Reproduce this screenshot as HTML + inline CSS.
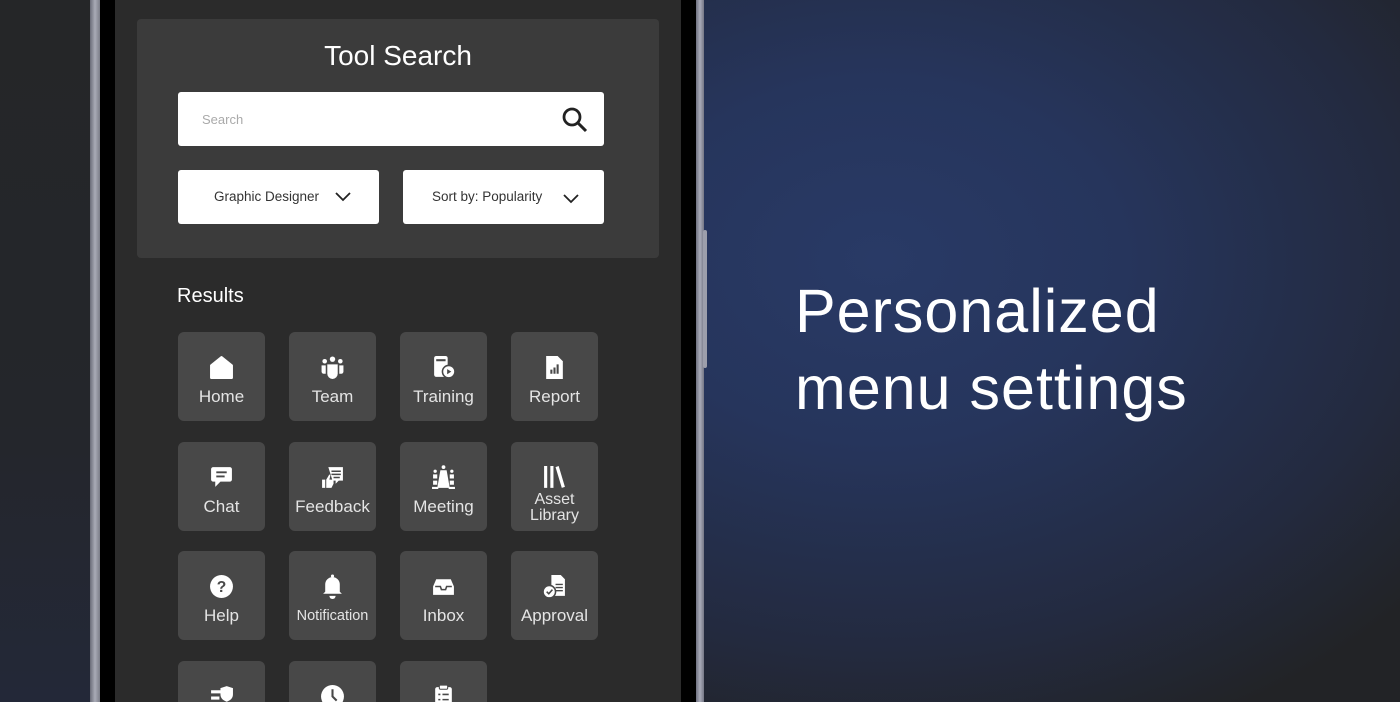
<!DOCTYPE html>
<html><head><meta charset="utf-8"><style>
*{margin:0;padding:0;box-sizing:border-box}
html{width:1400px;height:702px;overflow:hidden}
body{width:1400px;height:702px;overflow:hidden;position:relative;font-family:"Liberation Sans",sans-serif;
background:radial-gradient(ellipse 700px 520px at 880px 260px,#293a66 0%,#26355c 35%,#232a3f 75%,#222326 100%);}
.clip{position:absolute;left:0;top:0;width:1400px;height:702px;overflow:hidden}
.leftbg{position:absolute;left:0;top:0;width:700px;height:702px;background:linear-gradient(180deg,#252628 0%,#24262b 60%,#232838 100%)}
.frameL{position:absolute;left:90px;top:0;width:10px;height:702px;background:linear-gradient(90deg,#6a6c78,#a9abb6 50%,#7b7d88)}
.frameR{position:absolute;left:696px;top:0;width:8px;height:702px;background:linear-gradient(90deg,#6f7180,#a9abb8 50%,#757786)}
.btnR{position:absolute;left:703px;top:230px;width:4px;height:138px;border-radius:2px;background:#9c9eab}
.black{position:absolute;left:99px;top:0;width:598px;height:702px;background:#000}
.screen{position:absolute;left:115px;top:0;width:566px;height:702px;background:#2b2b2b}
.panel{position:absolute;left:137px;top:19px;width:522px;height:239px;background:#3b3b3b;border-radius:4px}
.title{position:absolute;left:137px;width:522px;top:40px;text-align:center;color:#fff;font-size:28px}
.box{position:absolute;background:#fff;border-radius:3px}
.res{position:absolute;left:177px;top:285px;color:#fff;font-size:20px}
.tile{position:absolute;width:87px;height:89px;background:#484848;border-radius:6px;color:#e4e4e4;text-align:center}
.tile svg{position:absolute;left:31px;top:23px}
.tile span{position:absolute;left:0;right:0;top:55px;font-size:17px}
.last{height:41px;border-radius:6px 6px 0 0}
.big{position:absolute;left:795px;color:#fff;font-size:61px;letter-spacing:1px}
</style></head><body><div class="clip">
<div class="leftbg"></div>
<div class="black"></div>
<div class="frameL"></div>
<div class="frameR"></div>
<div class="btnR"></div>
<div class="screen"></div>
<div class="panel"></div>
<div class="title">Tool Search</div>
<div class="box" style="left:178px;top:92px;width:426px;height:54px"><span style="position:absolute;left:24px;top:20px;font-size:13px;color:#aaa">Search</span>
<svg style="position:absolute;left:383px;top:14px" width="28" height="28" viewBox="0 0 28 28"><circle cx="11" cy="11" r="8" fill="none" stroke="#222" stroke-width="2.8"/><path d="M17 17l8 8" stroke="#222" stroke-width="3"/></svg></div>
<div class="box" style="left:178px;top:170px;width:201px;height:54px"><span style="position:absolute;left:36px;top:19px;font-size:13.5px;color:#333">Graphic Designer</span>
<svg style="position:absolute;left:157px;top:22px" width="16" height="10" viewBox="0 0 16 10"><path d="M1 1l7 7 7-7" fill="none" stroke="#222" stroke-width="1.8"/></svg></div>
<div class="box" style="left:403px;top:170px;width:201px;height:54px"><span style="position:absolute;left:29px;top:19px;font-size:13.5px;color:#333">Sort by: Popularity</span>
<svg style="position:absolute;left:160px;top:24px" width="16" height="10" viewBox="0 0 16 10"><path d="M1 1l7 7 7-7" fill="none" stroke="#222" stroke-width="1.8"/></svg></div>
<div class="res">Results</div>

<div class="tile" style="left:178px;top:332px"><svg width="25" height="25" viewBox="0 0 24 24"><path d="M2 10L12 2l10 8v12H2z" fill="#fff" stroke="#fff" stroke-linejoin="round" stroke-width="2"/></svg><span>Home</span></div>
<div class="tile" style="left:289px;top:332px"><svg width="25" height="25" viewBox="0 0 24 24"><circle cx="12" cy="4" r="2.6" fill="#fff"/><circle cx="4.5" cy="6" r="2.2" fill="#fff"/><circle cx="19.5" cy="6" r="2.2" fill="#fff"/><path d="M7 9h10v9a5 5 0 0 1-10 0z" fill="#fff"/><path d="M1.5 10h4v8h-2a2 2 0 0 1-2-2zM18.5 10h4v6a2 2 0 0 1-2 2h-2z" fill="#fff"/></svg><span>Team</span></div>
<div class="tile" style="left:400px;top:332px"><svg width="25" height="25" viewBox="0 0 24 24"><rect x="3" y="1" width="13" height="20" rx="2" fill="#fff"/><rect x="5" y="4" width="9" height="2" fill="#484848"/><circle cx="17" cy="16" r="6" fill="#fff" stroke="#484848" stroke-width="1.5"/><path d="M15.5 13.5v5l4-2.5z" fill="#484848"/></svg><span>Training</span></div>
<div class="tile" style="left:511px;top:332px"><svg width="25" height="25" viewBox="0 0 24 24"><path d="M4 1h11l5 5v17H4z" fill="#fff"/><path d="M8 18v-4h2v4zM11 18v-6h2v6zM14 18v-9h2v9z" fill="#484848"/></svg><span>Report</span></div>

<div class="tile" style="left:178px;top:442px"><svg width="25" height="25" viewBox="0 0 24 24"><path d="M4 2h16a2 2 0 0 1 2 2v10a2 2 0 0 1-2 2H11l-5 5v-5H4a2 2 0 0 1-2-2V4a2 2 0 0 1 2-2z" fill="#fff"/><path d="M7 7h10M7 11h8" stroke="#484848" stroke-width="1.8"/></svg><span>Chat</span></div>
<div class="tile" style="left:289px;top:442px"><svg width="25" height="25" viewBox="0 0 24 24"><path d="M8 2h14v13h-4l-3 3v-3H12z" fill="#fff"/><path d="M11 6h9M11 9h9M13 12h6" stroke="#484848" stroke-width="1.4"/><path d="M2 14h3v8H2zM6 14l3-5 1 1-1 4h4v4l-2 4H6z" fill="#fff"/></svg><span>Feedback</span></div>
<div class="tile" style="left:400px;top:442px"><svg width="25" height="25" viewBox="0 0 24 24"><circle cx="12" cy="2" r="1.8" fill="#fff"/><path d="M9 5h6l3 17H6z" fill="#fff"/><circle cx="4" cy="6" r="1.6" fill="#fff"/><circle cx="20" cy="6" r="1.6" fill="#fff"/><path d="M2 9h4v4H2zM18 9h4v4h-4zM2 15h4v4H2zM18 15h4v4h-4zM1 21h6v2H1zM17 21h6v2h-6z" fill="#fff"/></svg><span>Meeting</span></div>
<div class="tile" style="left:511px;top:442px"><svg width="25" height="25" viewBox="0 0 24 24"><path d="M2 1h3v21H2zM8 1h3v21H8zM13 2l3-1 6 20-3 1z" fill="#fff"/></svg><span style="top:50px;font-size:16px;line-height:16px">Asset<br>Library</span></div>

<div class="tile" style="left:178px;top:551px"><svg width="25" height="25" viewBox="0 0 24 24"><circle cx="12" cy="12" r="11" fill="#fff"/><text x="12" y="17.5" text-anchor="middle" font-family="Liberation Sans" font-weight="bold" font-size="15" fill="#484848">?</text></svg><span>Help</span></div>
<div class="tile" style="left:289px;top:551px"><svg width="25" height="25" viewBox="0 0 24 24"><circle cx="12" cy="2" r="1.5" fill="#fff"/><path d="M5 17V10a7 7 0 0 1 14 0v7l2 2H3z" fill="#fff"/><path d="M9 21a3 3 0 0 0 6 0z" fill="#fff"/></svg><span style="font-size:14.5px;top:57px">Notification</span></div>
<div class="tile" style="left:400px;top:551px"><svg width="25" height="25" viewBox="0 0 24 24"><path d="M5 5h14l3 7v8H2v-8z" fill="#fff"/><path d="M4 12h5l1 3h4l1-3h5" fill="none" stroke="#484848" stroke-width="1.5"/></svg><span>Inbox</span></div>
<div class="tile" style="left:511px;top:551px"><svg width="25" height="25" viewBox="0 0 24 24"><path d="M9 1h9l4 4v16H9z" fill="#fff"/><path d="M13 10h7M13 13h7M13 16h7" stroke="#484848" stroke-width="1.3"/><circle cx="7" cy="17" r="6" fill="#fff" stroke="#484848" stroke-width="1.5"/><path d="M4.5 17l2 2 3.5-4" fill="none" stroke="#484848" stroke-width="1.5"/></svg><span>Approval</span></div>

<div class="tile last" style="left:178px;top:661px;overflow:hidden"><svg width="25" height="25" viewBox="0 0 24 24"><path d="M2 6h10v3H2zM2 12h8v3H2z" fill="#fff"/><path d="M17 2l6 2v6c0 4-3 6-6 7-3-1-6-3-6-7V4z" fill="#fff"/></svg></div>
<div class="tile last" style="left:289px;top:661px;overflow:hidden"><svg width="25" height="25" viewBox="0 0 24 24"><circle cx="12" cy="12" r="11" fill="#fff"/><path d="M12 5v7l4 4" fill="none" stroke="#484848" stroke-width="2"/></svg></div>
<div class="tile last" style="left:400px;top:661px;overflow:hidden"><svg width="25" height="25" viewBox="0 0 24 24"><rect x="4" y="3" width="16" height="20" rx="2" fill="#fff"/><rect x="8" y="1" width="8" height="4" rx="1" fill="#fff" stroke="#484848"/><path d="M7 10h2M11 10h6M7 15h2M11 15h6" stroke="#484848" stroke-width="1.5"/></svg></div>

<div class="big" style="top:276px">Personalized</div>
<div class="big" style="top:353px">menu settings</div>
</div></body></html>
